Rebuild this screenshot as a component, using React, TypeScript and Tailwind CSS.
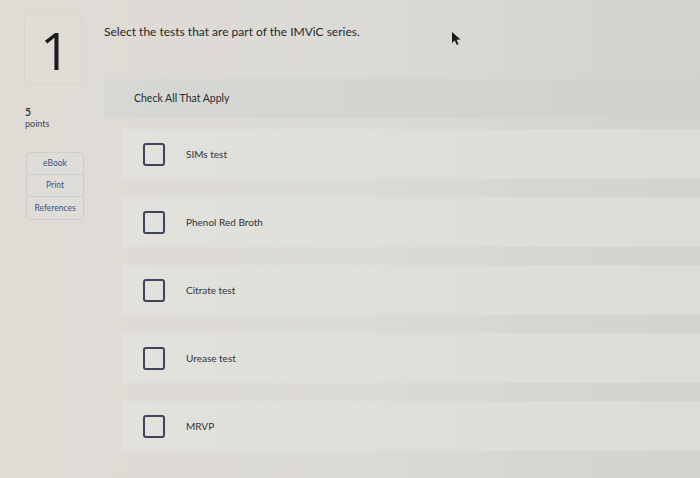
import React from "react";

const options = ["SIMs test", "Phenol Red Broth", "Citrate test", "Urease test", "MRVP"];

function Cursor() {
  return (
    <svg
      className="absolute left-[451px] top-[31px]"
      width="11"
      height="15"
      viewBox="0 0 11 15"
    >
      <path d="M1 1 L1 12 L3.8 9.4 L5.8 14 L7.6 13.2 L5.6 8.7 L9.5 8.6 Z" fill="#1e1e22" />
    </svg>
  );
}

export default function App() {
  return (
    <div
      className="relative flex h-[478px] w-[700px] overflow-hidden bg-gradient-to-r from-[#dfdcd6] via-[#dcdad4] to-[#d2d3ce] text-[#2e2e33]"
      style={{ fontFamily: "Lato, 'Open Sans', sans-serif" }}
    >
      <Cursor />

      {/* left column */}
      <aside className="flex w-[104px] shrink-0 flex-col pl-[24px] pt-[14px]">
        <div className="flex h-[71px] w-[58px] items-center justify-center rounded-md border border-[#d8d5cf] bg-[#e0ddd7] pl-[4px]">
          <span
            className="text-[52px] font-medium leading-none text-[#1c1c20]"
            style={{ fontFamily: "'Open Sans', sans-serif" }}
          >
            1
          </span>
        </div>

        <div className="mt-[21px] pl-[1px]">
          <p className="text-[10.5px] font-semibold leading-[12px]">5</p>
          <p className="text-[9px] leading-[11px] text-[#45454a]">points</p>
        </div>

        <div className="mt-[23px] ml-[2px] flex w-[58px] flex-col rounded border border-[#d0cdc7] bg-[#dfddd7] text-center text-[8.5px] text-[#3b5386]">
          <span className="flex h-[22px] items-center justify-center border-b border-[#d0cdc7]">eBook</span>
          <span className="flex h-[22px] items-center justify-center border-b border-[#d0cdc7]">Print</span>
          <span className="flex h-[22px] items-center justify-center">References</span>
        </div>
      </aside>

      {/* main column */}
      <main className="flex flex-1 flex-col">
        <p className="pt-[25px] text-[12px] leading-[14px] text-[#26262b]">
          Select the tests that are part of the IMViC series.
        </p>

        <div className="mt-[40px] flex h-[39px] items-center bg-gradient-to-r from-[#d6d8d3] to-[#cfd1cc] pl-[30px]">
          <span className="text-[10.5px] text-[#2a2a2f]">Check All That Apply</span>
        </div>

        <ul className="mt-[11px] flex flex-col gap-[18px] pl-[18px]">
          {options.map((label) => (
            <li
              key={label}
              className="flex h-[50px] items-center bg-gradient-to-r from-[#e2e1dc] to-[#dcddd8] pl-[21px]"
            >
              <span className="h-[23px] w-[22px] shrink-0 rounded-[3px] border-2 border-[#3f445e]" />
              <span className="ml-[21px] text-[10px] text-[#333338]">{label}</span>
            </li>
          ))}
        </ul>
      </main>
    </div>
  );
}
